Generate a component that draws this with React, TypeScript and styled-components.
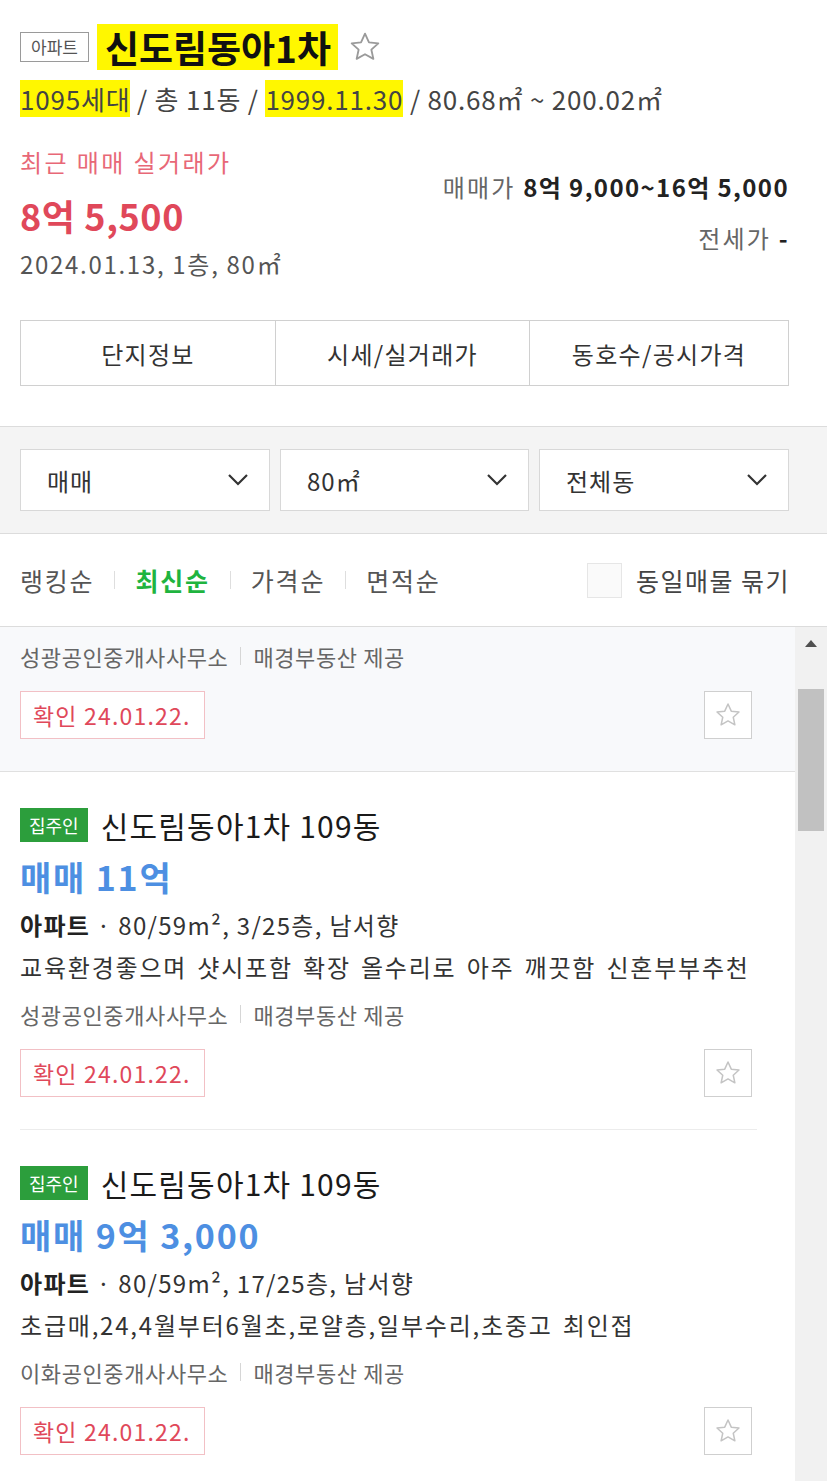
import React from "react";
import styled, { createGlobalStyle } from "styled-components";

const GlobalStyle = createGlobalStyle`
  html, body {
    margin: 0;
    padding: 0;
    background: #fff;
  }
  body {
    font-family: "Noto Sans CJK KR", "Noto Sans", sans-serif;
    color: #222;
  }
`;

const Page = styled.div`
  width: 827px;
  height: 1481px;
  overflow: hidden;
  background: #fff;
  display: flex;
  flex-direction: column;
`;

//
// header
/////////////////////////////////////////////////////////////////////////////////
const Header = styled.header`
  padding: 24px 38px 40px 20px;
`;
const TitleRow = styled.div`
  display: flex;
  align-items: center;
  height: 46px;
`;
const TypeTag = styled.span`
  box-sizing: border-box;
  height: 30px;
  padding: 0 10px;
  border: 1px solid #9a9a9a;
  font-size: 17px;
  line-height: 28px;
  color: #555;
  margin-right: 8px;
`;
const Mark = styled.span`
  background: #fff700;
`;
const Title = styled.h1`
  margin: 0;
  font-size: 37px;
  font-weight: 700;
  line-height: 46px;
  padding: 0 7px 0 8px;
  background: #fff700;
  color: #111;
`;
const TitleStar = styled.span`
  display: flex;
  margin-left: 10px;
`;
const Summary = styled.div`
  margin-top: 12px;
  height: 34px;
  line-height: 34px;
  font-size: 26px;
  color: #444;
  letter-spacing: 0.8px;
  white-space: nowrap;
`;

// price
const PriceRow = styled.div`
  margin-top: 30px;
  display: flex;
  justify-content: space-between;
`;
const RecentPrice = styled.div`
  display: flex;
  flex-direction: column;
`;
const RecentLabel = styled.div`
  font-size: 24px;
  line-height: 32px;
  color: #e86877;
  letter-spacing: 2.4px;
`;
const RecentAmount = styled.div`
  margin-top: 14px;
  font-size: 36px;
  line-height: 46px;
  font-weight: 700;
  color: #e0485a;
  letter-spacing: 0.6px;
`;
const RecentDetail = styled.div`
  margin-top: 10px;
  font-size: 24px;
  line-height: 32px;
  color: #555;
  letter-spacing: 1.7px;
`;
const RangeBox = styled.div`
  padding-top: 25px;
  display: flex;
  flex-direction: column;
  align-items: flex-end;
`;
const RangeLine = styled.div<{ $gap?: number }>`
  margin-top: ${(p) => p.$gap ?? 0}px;
  font-size: 24px;
  line-height: 32px;
  color: #666;
  letter-spacing: 2.2px;
  & b {
    color: #222;
    font-weight: 700;
    letter-spacing: 1.4px;
  }
`;

// tabs
const TabGroup = styled.div`
  margin-top: 40px;
  display: grid;
  grid-template-columns: 254px 254px 1fr;
  border: 1px solid #d0d0d0;
  height: 66px;
  box-sizing: border-box;
`;
const Tab = styled.div`
  display: flex;
  align-items: center;
  justify-content: center;
  font-size: 24px;
  color: #333;
  letter-spacing: 1.3px;
  & + & {
    border-left: 1px solid #d0d0d0;
  }
`;

//
// filters
/////////////////////////////////////////////////////////////////////////////////
const FilterBar = styled.div`
  border-top: 1px solid #dcdcdc;
  border-bottom: 1px solid #dcdcdc;
  background: #f4f4f4;
  padding: 22px 38px 22px 20px;
  display: grid;
  grid-template-columns: 250px 1fr 250px;
  gap: 10px;
`;
const Select = styled.div`
  box-sizing: border-box;
  height: 62px;
  background: #fff;
  border: 1px solid #d8d8d8;
  display: flex;
  align-items: center;
  justify-content: space-between;
  padding: 0 20px 0 26px;
  font-size: 24px;
  color: #333;
  letter-spacing: 1px;
`;

// sort
const SortBar = styled.div`
  height: 92px;
  border-bottom: 1px solid #dcdcdc;
  padding: 0 37px 0 20px;
  display: flex;
  align-items: center;
  justify-content: space-between;
`;
const SortList = styled.div`
  display: flex;
  align-items: center;
`;
const SortItem = styled.span<{ $active?: boolean }>`
  font-size: 25px;
  letter-spacing: ${(p) => (p.$active ? 1.8 : 1.8)}px;
  color: ${(p) => (p.$active ? "#1fb43f" : "#555")};
  font-weight: ${(p) => (p.$active ? 700 : 400)};
`;
const SortDivider = styled.span`
  width: 1px;
  height: 18px;
  background: #dedede;
  margin: 0 20px;
`;
const BundleCheck = styled.label`
  display: flex;
  align-items: center;
  gap: 14px;
  font-size: 25px;
  color: #444;
  letter-spacing: 1.5px;
`;
const CheckBox = styled.span`
  box-sizing: border-box;
  width: 35px;
  height: 35px;
  border: 1px solid #e6e6e6;
  background: #fafafa;
`;

//
// list
/////////////////////////////////////////////////////////////////////////////////
const ListArea = styled.div`
  flex: 1;
  display: flex;
  min-height: 0;
`;
const List = styled.div`
  flex: 1;
  overflow: hidden;
`;
const Article = styled.article<{ $selected?: boolean }>`
  padding: ${(p) => (p.$selected ? "12px 43px 32px 20px" : "33px 43px 32px 20px")};
  background: ${(p) => (p.$selected ? "#f8f9fb" : "#fff")};
  border-bottom: ${(p) => (p.$selected ? "1px solid #e0e0e0" : "none")};
`;
const ArticleSeparator = styled.div`
  margin: 0 38px 0 20px;
  height: 1px;
  background: #ececec;
`;
const ArticleTitleRow = styled.div`
  display: flex;
  align-items: center;
  height: 40px;
  gap: 13px;
`;
const OwnerBadge = styled.span`
  height: 34px;
  padding: 0 9px;
  background: #2c9e3c;
  color: #fff;
  font-size: 18px;
  line-height: 34px;
`;
const ArticleTitle = styled.span`
  font-size: 30px;
  color: #1a1a1a;
  letter-spacing: 1.2px;
`;
const ArticlePrice = styled.div`
  margin-top: 8px;
  font-size: 34px;
  line-height: 48px;
  font-weight: 700;
  color: #4d8fe2;
  letter-spacing: 1.8px;
`;
const Spec = styled.div`
  margin-top: 4px;
  font-size: 24px;
  line-height: 40px;
  color: #333;
  letter-spacing: 1.3px;
  & b {
    font-weight: 700;
    color: #222;
  }
`;
const Description = styled.div`
  margin-top: 4px;
  font-size: 24px;
  line-height: 36px;
  color: #333;
  letter-spacing: 1.8px;
  word-spacing: 3px;
  white-space: nowrap;
`;
const Agent = styled.div<{ $gap: number }>`
  margin-top: ${(p) => p.$gap}px;
  display: flex;
  align-items: center;
  font-size: 22px;
  line-height: 34px;
  color: #666;
  letter-spacing: 0.6px;
`;
const AgentDivider = styled.span`
  width: 1px;
  height: 18px;
  background: #d6d6d6;
  margin: 0 12px;
`;
const BottomRow = styled.div`
  margin-top: 18px;
  display: flex;
  align-items: center;
  justify-content: space-between;
`;
const ConfirmTag = styled.span`
  box-sizing: border-box;
  height: 48px;
  width: 185px;
  border: 1px solid #f2c0c5;
  background: #fff;
  color: #e0485a;
  font-size: 23px;
  line-height: 46px;
  padding-left: 12px;
  letter-spacing: 1.2px;
  white-space: nowrap;
`;
const StarButton = styled.button`
  box-sizing: border-box;
  width: 48px;
  height: 48px;
  border: 1px solid #cfcfcf;
  background: #fff;
  display: flex;
  align-items: center;
  justify-content: center;
  padding: 0;
`;

// scrollbar
const Scrollbar = styled.div`
  width: 32px;
  background: #f1f1f1;
  display: flex;
  flex-direction: column;
  align-items: center;
`;
const ScrollArrow = styled.div`
  margin-top: 13px;
  width: 0;
  height: 0;
  border-left: 6px solid transparent;
  border-right: 6px solid transparent;
  border-bottom: 7px solid #505050;
`;
const ScrollThumb = styled.div`
  margin-top: 42px;
  width: 26px;
  height: 142px;
  background: #c1c1c1;
`;

const Star = ({ size, color }: { size: number; color: string }) => (
  <svg width={size} height={size} viewBox="0 0 24 24" fill="none">
    <path
      d="M12 2.6l2.8 6.1 6.6.7-4.9 4.5 1.4 6.5L12 17.1l-5.9 3.3 1.4-6.5-4.9-4.5 6.6-.7z"
      stroke={color}
      strokeWidth="1.3"
      strokeLinejoin="round"
    />
  </svg>
);

const Chevron = () => (
  <svg width="22" height="14" viewBox="0 0 22 14" fill="none">
    <path d="M2 2l9 9 9-9" stroke="#333" strokeWidth="2.2" />
  </svg>
);

type Listing = {
  title: string;
  price: string;
  spec: string;
  desc: string;
  agent: string;
};

const listings: Listing[] = [
  {
    title: "신도림동아1차 109동",
    price: "매매 11억",
    spec: "80/59m², 3/25층, 남서향",
    desc: "교육환경좋으며 샷시포함 확장 올수리로 아주 깨끗함 신혼부부추천",
    agent: "성광공인중개사사무소",
  },
  {
    title: "신도림동아1차 109동",
    price: "매매 9억 3,000",
    spec: "80/59m², 17/25층, 남서향",
    desc: "초급매,24,4월부터6월초,로얄층,일부수리,초중고 최인접",
    agent: "이화공인중개사사무소",
  },
];

const ArticleFooter = ({ agent, gap }: { agent: string; gap: number }) => (
  <>
    <Agent $gap={gap}>
      {agent}
      <AgentDivider />
      매경부동산 제공
    </Agent>
    <BottomRow>
      <ConfirmTag>확인 24.01.22.</ConfirmTag>
      <StarButton>
        <Star size={28} color="#c4c4c4" />
      </StarButton>
    </BottomRow>
  </>
);

const App = () => {
  return (
    <Page>
      <GlobalStyle />
      <Header>
        <TitleRow>
          <TypeTag>아파트</TypeTag>
          <Title>신도림동아1차</Title>
          <TitleStar>
            <Star size={34} color="#9a9a9a" />
          </TitleStar>
        </TitleRow>
        <Summary>
          <Mark>1095세대</Mark> / 총 11동 / <Mark>1999.11.30</Mark> / 80.68㎡ ~ 200.02㎡
        </Summary>
        <PriceRow>
          <RecentPrice>
            <RecentLabel>최근 매매 실거래가</RecentLabel>
            <RecentAmount>8억 5,500</RecentAmount>
            <RecentDetail>2024.01.13, 1층, 80㎡</RecentDetail>
          </RecentPrice>
          <RangeBox>
            <RangeLine>
              매매가 <b>8억 9,000~16억 5,000</b>
            </RangeLine>
            <RangeLine $gap={19}>
              전세가 <b>-</b>
            </RangeLine>
          </RangeBox>
        </PriceRow>
        <TabGroup>
          <Tab>단지정보</Tab>
          <Tab>시세/실거래가</Tab>
          <Tab>동호수/공시가격</Tab>
        </TabGroup>
      </Header>
      <FilterBar>
        <Select>
          매매
          <Chevron />
        </Select>
        <Select>
          80㎡
          <Chevron />
        </Select>
        <Select>
          전체동
          <Chevron />
        </Select>
      </FilterBar>
      <SortBar>
        <SortList>
          <SortItem>랭킹순</SortItem>
          <SortDivider />
          <SortItem $active>최신순</SortItem>
          <SortDivider />
          <SortItem>가격순</SortItem>
          <SortDivider />
          <SortItem>면적순</SortItem>
        </SortList>
        <BundleCheck>
          <CheckBox />
          동일매물 묶기
        </BundleCheck>
      </SortBar>
      <ListArea>
        <List>
          <Article $selected>
            <ArticleFooter agent="성광공인중개사사무소" gap={0} />
          </Article>
          {listings.map((item, i) => (
            <React.Fragment key={i}>
              {i > 0 && <ArticleSeparator />}
              <Article>
                <ArticleTitleRow>
                  <OwnerBadge>집주인</OwnerBadge>
                  <ArticleTitle>{item.title}</ArticleTitle>
                </ArticleTitleRow>
                <ArticlePrice>{item.price}</ArticlePrice>
                <Spec>
                  <b>아파트</b> · {item.spec}
                </Spec>
                <Description>{item.desc}</Description>
                <ArticleFooter agent={item.agent} gap={12} />
              </Article>
            </React.Fragment>
          ))}
        </List>
        <Scrollbar>
          <ScrollArrow />
          <ScrollThumb />
        </Scrollbar>
      </ListArea>
    </Page>
  );
};

export default App;
